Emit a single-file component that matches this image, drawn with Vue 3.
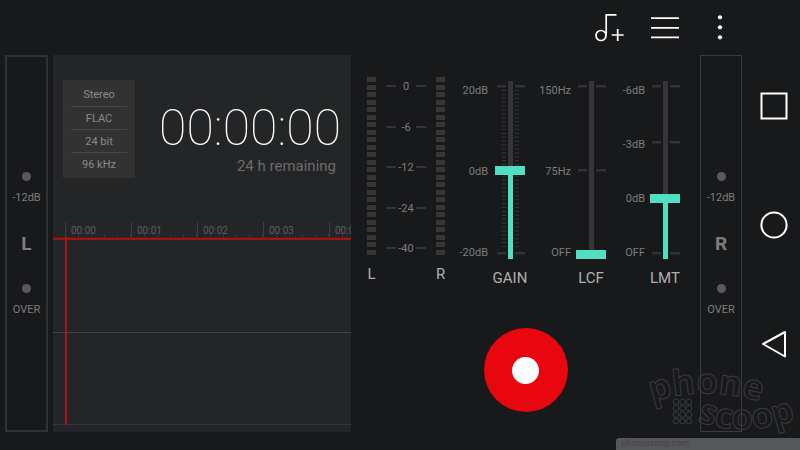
<script setup>
import { ref } from 'vue'

const format = ['Stereo', 'FLAC', '24 bit', '96 kHz']
const seconds = ['00:00', '00:01', '00:02', '00:03', '00:04']
const scale = ['0', '-6', '-12', '-24', '-40']

const faders = ref([
  { id: 'gain', name: 'GAIN', labels: ['20dB', '0dB', '-20dB'], ticks: [5, 172], fine: true, value: 50 },
  { id: 'lcf', name: 'LCF', labels: ['150Hz', '75Hz', 'OFF'], ticks: [5, 89, 172], fine: false, value: 0 },
  { id: 'lmt', name: 'LMT', labels: ['-6dB', '-3dB', '0dB', 'OFF'], ticks: [5, 61, 116, 172], fine: false, value: 33 }
])
</script>

<template>
  <div class="screen">
    <div class="app">
      <header class="toolbar">
        <button type="button" aria-label="Add track">
          <svg width="30" height="30" viewBox="0 0 30 30">
            <g fill="none" stroke="#fff" stroke-width="1.7">
              <circle cx="6" cy="22.500" r="5" />
              <path d="M11.200 22.500V1.800H21.500M22.700 16V28M16.700 22H28.700" />
            </g>
          </svg>
        </button>
        <button type="button" aria-label="Menu">
          <svg width="28" height="30" viewBox="0 0 28 30">
            <path d="M0 5.200H28M0 14.900H28M0 24.400H28" stroke="#fff" stroke-width="1.8" />
          </svg>
        </button>
        <button type="button" aria-label="More options">
          <svg width="6" height="30" viewBox="0 0 6 30" fill="#fff">
            <circle cx="3" cy="4.300" r="2.1" />
            <circle cx="3" cy="14.300" r="2.1" />
            <circle cx="3" cy="24.300" r="2.1" />
          </svg>
        </button>
      </header>

      <main class="deck">
        <section class="channel left">
          <i class="lamp"></i>
          <span>-12dB</span>
          <b>L</b>
          <i class="lamp"></i>
          <span>OVER</span>
        </section>

        <section class="recorder">
          <div class="info">
            <ul class="format">
              <li v-for="f in format" :key="f">{{ f }}</li>
            </ul>
            <div class="clock">
              <div class="time">00:00:00</div>
              <div class="remaining">24 h remaining</div>
            </div>
          </div>
          <div class="ruler">
            <div v-for="s in seconds" :key="s" class="second">{{ s }}</div>
          </div>
          <div class="wave">
            <div class="half"></div>
            <div class="half"></div>
            <div class="playhead"></div>
          </div>
        </section>

        <section class="controls">
          <div class="mixer">
            <div class="levels">
              <div class="level">
                <div class="segments"><i v-for="n in 24" :key="n"></i></div>
                <span class="name">L</span>
              </div>
              <ul class="scale">
                <li v-for="s in scale" :key="s"><span>{{ s }}</span></li>
              </ul>
              <div class="level">
                <div class="segments"><i v-for="n in 24" :key="n"></i></div>
                <span class="name">R</span>
              </div>
            </div>

            <div v-for="f in faders" :key="f.id" class="fader" :class="f.id">
              <ul class="marks">
                <li v-for="l in f.labels" :key="l">{{ l }}</li>
              </ul>
              <div class="slot">
                <svg width="30" height="178" viewBox="0 0 30 178" fill="#323335">
                  <g v-for="t in f.ticks" :key="t">
                    <rect x="2" :y="t - 1" width="9" height="2.500" />
                    <rect x="20" :y="t - 1" width="10" height="2.500" />
                  </g>
                  <template v-if="f.fine">
                    <g v-for="n in 41" :key="n">
                      <rect x="7" :y="5 + n * 3.900" width="4" height="1.200" />
                      <rect x="20" :y="5 + n * 3.900" width="4" height="1.200" />
                    </g>
                  </template>
                </svg>
                <input
                  :id="f.id"
                  v-model="f.value"
                  type="range"
                  min="0"
                  max="100"
                  :style="{ '--fill': f.value + '%' }"
                />
              </div>
              <label class="name" :for="f.id">{{ f.name }}</label>
            </div>
          </div>
          <button type="button" class="record" aria-label="Record"><i></i></button>
        </section>

        <section class="channel right">
          <i class="lamp"></i>
          <span>-12dB</span>
          <b>R</b>
          <i class="lamp"></i>
          <span>OVER</span>
        </section>
      </main>
    </div>

    <nav class="system">
      <button type="button" aria-label="Recent apps">
        <svg width="28" height="28" viewBox="0 0 28 28"><rect x="1.500" y="1.500" width="25" height="25" fill="none" stroke="#fff" stroke-width="2" /></svg>
      </button>
      <button type="button" aria-label="Home">
        <svg width="28" height="28" viewBox="0 0 28 28"><circle cx="14" cy="14" r="12.600" fill="none" stroke="#fff" stroke-width="2" /></svg>
      </button>
      <button type="button" aria-label="Back">
        <svg width="28" height="28" viewBox="0 0 28 28"><path d="M3 14L25 2V26.500Z" fill="none" stroke="#fff" stroke-width="2" stroke-linejoin="round" /></svg>
      </button>
    </nav>

    <div class="credit">
      <svg width="152" height="72" viewBox="0 0 152 72" fill="none" stroke="#3a3b3d" stroke-width="1">
        <defs>
          <path id="arc-top" d="M4 36Q56 18 122 38" />
          <path id="arc-bottom" d="M49 55Q98 74 158 50" />
        </defs>
        <g class="mark">
          <text><textPath href="#arc-top">phone</textPath></text>
          <text><textPath href="#arc-bottom">scoop</textPath></text>
        </g>
        <g v-for="r in 4" :key="r">
          <circle v-for="c in 3" :key="c" :cx="21.500 + c * 6.500" :cy="29.500 + r * 6.400" r="2.800" />
        </g>
      </svg>
      <div class="strip">phonescoop.com</div>
    </div>
  </div>
</template>

<style>
body {
  background: #18191b;
}
</style>

<style scoped>
* {
  box-sizing: border-box;
}

.screen {
  position: relative;
  display: flex;
  min-height: 100vh;
  overflow: hidden;
  background: #18191b;
  color: #7d7d7f;
  font: 11px/16px Roboto, "Liberation Sans", sans-serif;
}

button {
  display: flex;
  align-items: center;
  justify-content: center;
  padding: 0;
  border: 0;
  background: none;
  cursor: pointer;
}

ul {
  margin: 0;
  padding: 0;
  list-style: none;
}

.app {
  display: flex;
  flex: 1;
  flex-direction: column;
  min-width: 0;
  padding: 0 5px 18px;
}

.toolbar {
  display: flex;
  justify-content: flex-end;
  gap: 26px;
  height: 55px;
  padding-right: 19px;
}

.toolbar button:last-child {
  margin-left: 12px;
}

.deck {
  display: flex;
  flex: 1;
}

.channel {
  display: flex;
  flex: none;
  flex-direction: column;
  align-items: center;
  width: 42px;
  padding-top: 116px;
  border: 1px solid #3a3b3d;
}

.channel.left {
  width: 43px;
  padding-top: 115px;
  border: 2px solid #303133;
}

.lamp {
  width: 9px;
  height: 9px;
  border-radius: 50%;
  background: #5a5a5c;
}

.channel span {
  margin-top: 9px;
}

.channel b {
  margin: 30px 0 32px;
  font-size: 19px;
}

.recorder {
  display: flex;
  flex: 6 1 298px;
  flex-direction: column;
  min-width: 0;
  margin-left: 5px;
  padding-bottom: 7px;
  overflow: hidden;
  background: #242527;
}

.info {
  display: flex;
  justify-content: space-between;
  height: 167px;
  padding: 25px 10px 0;
}

.format {
  width: 72px;
  height: 98px;
  padding: 3px 8px;
  background: #323232;
  color: #8a8a8b;
  text-align: center;
}

.format li {
  height: 23px;
  line-height: 24px;
}

.format li + li {
  border-top: 1px solid #48484a;
}

.clock {
  padding-top: 22px;
  text-align: right;
}

.time {
  color: #fff;
  font-size: 50px;
  font-weight: 100;
  line-height: 52px;
}

.remaining {
  padding: 2px 5px 0 0;
  color: #6b6b6d;
  font-size: 15px;
  line-height: 20px;
}

.ruler {
  display: flex;
  height: 16px;
  padding-left: 12px;
  border-bottom: 1px solid #5c191c;
}

.second {
  flex: none;
  width: 66px;
  padding-left: 5px;
  border-left: 1px solid #3d3e40;
  background: repeating-linear-gradient(90deg, transparent 0 12px, #343537 12px 13px) 0 100% / 100% 3px no-repeat;
  color: #5d5d5f;
  font-size: 10px;
  line-height: 17px;
}

.wave {
  position: relative;
  display: flex;
  flex: 1;
  flex-direction: column;
  border-top: 2px solid #a01416;
}

.half {
  flex: 1;
  border-bottom: 1px solid #434446;
}

.half + .half {
  border-color: #353638;
}

.playhead {
  position: absolute;
  top: -3px;
  bottom: 0;
  left: 12px;
  width: 2px;
  background: #b31214;
}

.controls {
  display: flex;
  flex: 7 1 349px;
  flex-direction: column;
  align-items: center;
  justify-content: space-between;
  padding: 22px 20px 20px 16px;
}

.mixer {
  display: flex;
  align-items: flex-start;
  justify-content: space-between;
  width: 100%;
}

.levels {
  display: flex;
  gap: 10px;
}

.level {
  display: flex;
  flex-direction: column;
  align-items: center;
  gap: 10px;
  width: 9px;
}

.segments {
  display: flex;
  flex-direction: column;
  justify-content: space-between;
  width: 9px;
  height: 178px;
}

.segments i {
  height: 5px;
  background: #363636;
}

.scale,
.marks {
  display: flex;
  flex-direction: column;
  justify-content: space-between;
  height: 178px;
}

.scale {
  width: 40px;
  margin-top: 2px;
}

.scale li {
  display: flex;
  align-items: center;
  justify-content: space-between;
}

.scale li::before,
.scale li::after {
  width: 10px;
  height: 2px;
  margin-bottom: 2px;
  background: #363638;
  content: "";
}

.scale span {
  display: flex;
  justify-content: center;
  width: 20px;
}

.name {
  color: #b0b0b2;
  font-size: 15px;
  line-height: 18px;
  white-space: nowrap;
}

.fader {
  display: grid;
  grid-template-columns: 1fr 30px;
  gap: 8px 5px;
  width: 67px;
  margin-top: 4px;
}

.fader.gain {
  column-gap: 7px;
  width: 66px;
}

.fader.lmt {
  width: 60px;
}

.fader .name {
  grid-column: 2;
  justify-self: center;
}

.marks {
  margin-top: 2px;
  text-align: right;
  white-space: nowrap;
}

.slot {
  display: grid;
  align-content: start;
}

.slot > * {
  grid-area: 1 / 1;
}

.slot input {
  width: 30px;
  height: 178px;
  margin: 0;
  appearance: none;
  background: linear-gradient(0deg, #50dfc2 var(--fill), #363638 var(--fill)) center / 5px 100% no-repeat;
  cursor: pointer;
  direction: rtl;
  writing-mode: vertical-lr;
}

.slot input::-webkit-slider-thumb {
  width: 30px;
  height: 9px;
  appearance: none;
  background: #50dfc2;
}

.record {
  width: 84px;
  height: 84px;
  margin-left: 4px;
  border-radius: 50%;
  background: #e8070f;
}

.record i {
  width: 27px;
  height: 27px;
  border-radius: 50%;
  background: #fff;
}

.system {
  display: flex;
  flex: none;
  flex-direction: column;
  align-items: center;
  justify-content: center;
  gap: 91px;
  width: 53px;
}

.credit {
  position: absolute;
  right: 0;
  bottom: 0;
  display: flex;
  flex-direction: column;
  align-items: flex-end;
  pointer-events: none;
}

.credit svg {
  overflow: visible;
}

.mark {
  font: 700 35px "Open Sans", sans-serif;
}

.strip {
  width: 184px;
  height: 12px;
  padding-left: 5px;
  border-radius: 3px 0 0;
  background: #565759;
  color: #434446;
  font: 8px/12px "DejaVu Sans", sans-serif;
}
</style>
